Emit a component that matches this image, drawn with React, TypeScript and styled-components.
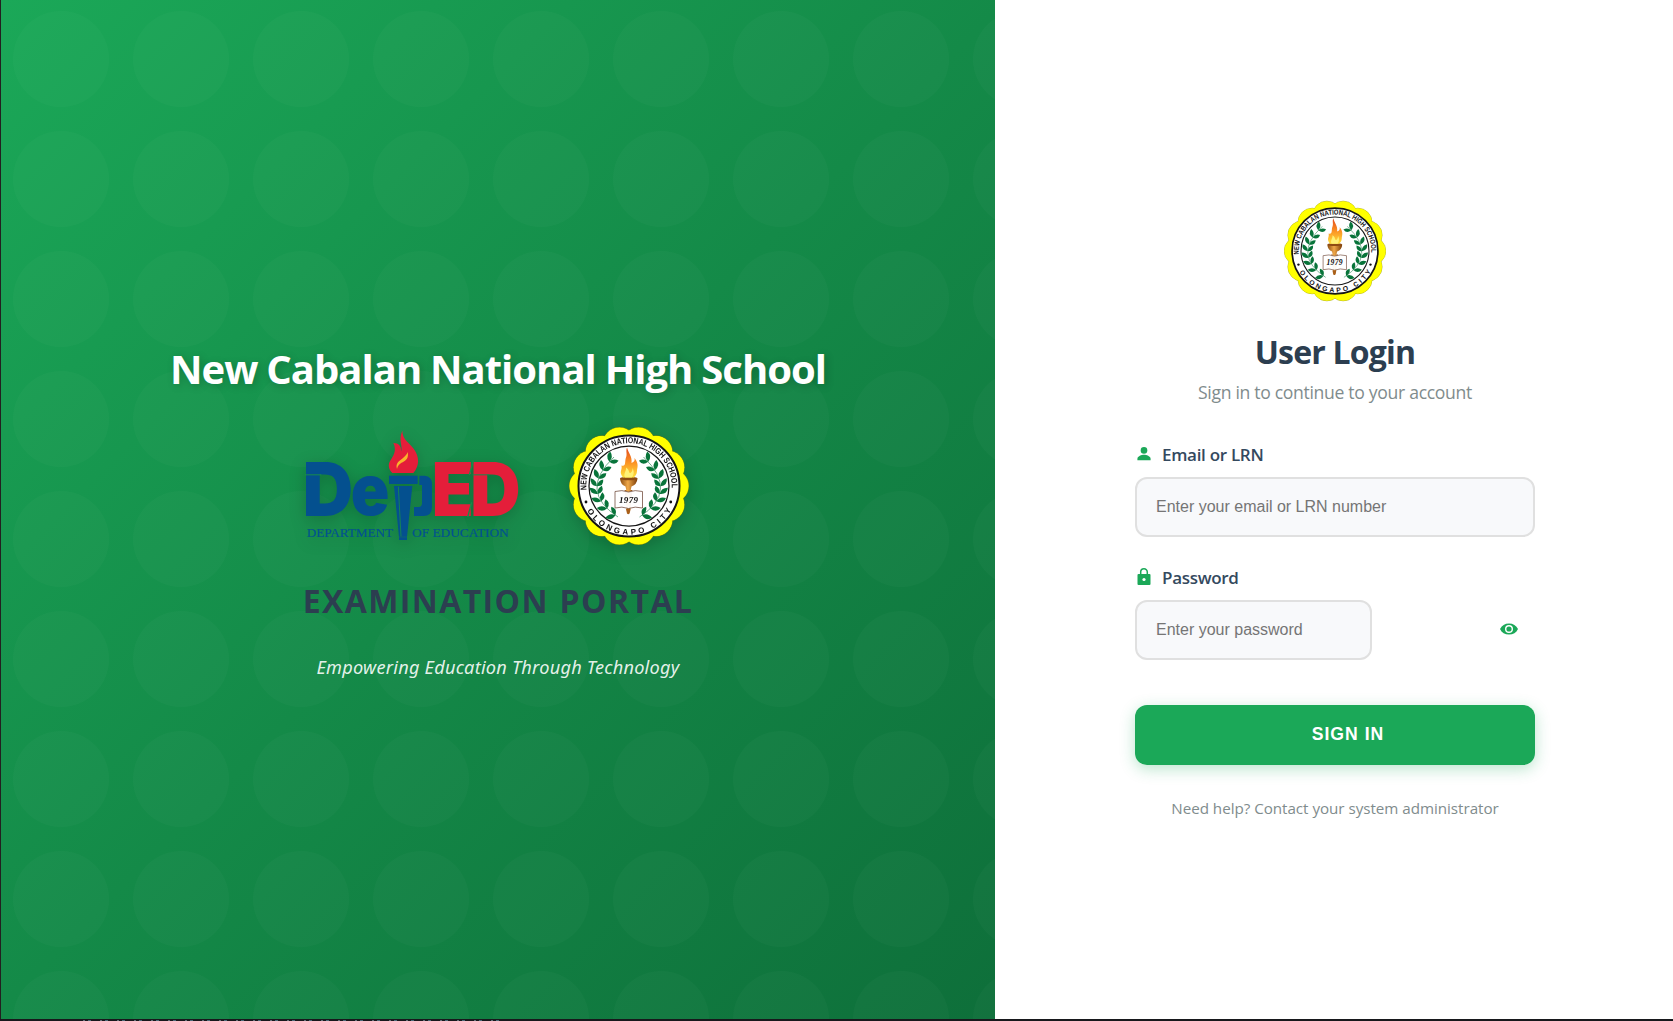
import React, { useState } from "react";
import styled, { createGlobalStyle } from "styled-components";

const GlobalStyle = createGlobalStyle`
  *, *::before, *::after { box-sizing: border-box; }
  html, body { margin: 0; padding: 0; height: 100%; overflow: hidden; }
  body { background: #17181c; font-family: "Segoe UI", "Open Sans", "Noto Sans", sans-serif; }
`;

const Page = styled.div`
  display: flex;
  flex-direction: column;
  width: 1673px;
  height: 1021px;
`;

const Split = styled.main`
  display: flex;
  flex: 1;
  min-height: 0;
  padding-left: 1px;
  background: #231f20;
`;

const Brand = styled.section`
  width: 994px;
  display: flex;
  flex-direction: column;
  align-items: center;
  padding-top: 345px;
  background:
    radial-gradient(circle at 50% 50%, rgba(255, 255, 255, 0.02) 47.6px, transparent 48.4px) 0 -1px / 120px 120px,
    linear-gradient(135deg, #1ba858 0%, #148a48 50%, #0e6f3a 100%);
`;

const Title = styled.h1`
  margin: 0 0 33px;
  font-size: 40px;
  line-height: 48px;
  font-weight: 700;
  letter-spacing: -0.98px;
  word-spacing: -0.6px;
  color: #fff;
  white-space: nowrap;
  text-shadow: 2px 2px 8px rgba(0, 0, 0, 0.2);
`;

const Logos = styled.div`
  display: flex;
  align-items: center;
  gap: 49px;
  height: 120px;
  margin-bottom: 35px;
  padding-right: 2px;
  svg { filter: drop-shadow(0 4px 8px rgba(0, 0, 0, 0.2)); overflow: visible; }
`;

const Portal = styled.h2`
  margin: 0 0 34px;
  font-size: 32px;
  line-height: 40px;
  font-weight: 700;
  letter-spacing: 1.4px;
  word-spacing: 1px;
  color: #2c3e50;
  white-space: nowrap;
`;

const Tagline = styled.p`
  margin: 0;
  font-family: "Segoe UI", "Noto Sans", "Open Sans", sans-serif;
  font-size: 18.2px;
  line-height: 24px;
  font-style: italic;
  letter-spacing: 0.22px;
  color: rgba(255, 255, 255, 0.9);
  white-space: nowrap;
`;

const LoginPanel = styled.section`
  flex: 1;
  display: flex;
  flex-direction: column;
  align-items: center;
  padding: 200px 0 0 2px;
  background: #fff;
`;

const Heading = styled.h2`
  margin: 30px 0 8px;
  font-size: 32px;
  line-height: 40px;
  font-weight: 700;
  letter-spacing: -0.8px;
  color: #2c3e50;
`;

const Subtitle = styled.p`
  margin: 0 0 39px;
  font-size: 17.6px;
  line-height: 24px;
  letter-spacing: -0.32px;
  color: #7f8c8d;
`;

const Form = styled.form`
  display: flex;
  flex-direction: column;
  width: 400px;
`;

const Label = styled.label`
  display: flex;
  align-items: center;
  height: 24px;
  margin-bottom: 10px;
  font-size: 17px;
  line-height: 24px;
  font-weight: 600;
  letter-spacing: -0.3px;
  color: #34495e;
  svg { margin: -3px 9px 0 0; }
`;

const Field = styled.div`
  display: flex;
  align-items: center;
  justify-content: space-between;
  margin-bottom: 29px;
  padding-right: 17px;
`;

const Input = styled.input<{ $width: number }>`
  flex: none;
  width: ${(p) => p.$width}px;
  height: 60px;
  padding: 0 20px 1px 19px;
  border: 2px solid #e0e0e0;
  border-radius: 12px;
  background: #f8f9fb;
  font: 16px "Liberation Sans", Arial, sans-serif;
  outline: none;
  &::placeholder { color: #757575; opacity: 1; }
`;

const EyeButton = styled.button`
  display: flex;
  padding: 0;
  border: 0;
  background: none;
  margin-top: -3px;
`;

const SignIn = styled.button`
  height: 60px;
  margin: 16px 0 31px;
  padding: 0 0 2px 26px;
  border: 0;
  border-radius: 12px;
  background: #1ba858;
  color: #fff;
  font: bold 17.6px "Liberation Sans", Arial, sans-serif;
  letter-spacing: 1px;
  box-shadow: 0 4px 15px rgba(27, 168, 88, 0.3);
`;

const Help = styled.p`
  margin: 0;
  font-size: 15.2px;
  line-height: 24px;
  letter-spacing: -0.03px;
  text-align: center;
  white-space: nowrap;
  color: #7f8c8d;
`;

const Footer = styled.footer`
  height: 2px;
  background:
    repeating-linear-gradient(90deg, #17181c 0 3px, #66717a 3px 5px, #17181c 5px 8px, #4d6b7a 8px 11px, #17181c 11px 17px) 80px 1px / 426px 1px no-repeat,
    #17181c;
`;

const LEAF_ANGLES = [-62, -45, -28, -10, 6, 20, 34, 48];

function Laurel() {
  return (
    <g fill="#08743a">
      <path d="M98 182 Q18 130 90 62" fill="none" stroke="#08743a" strokeWidth="1.2" />
      {LEAF_ANGLES.map((angle, i) => {
        const t = 0.04 + i * 0.128;
        const x = (1 - t) * (1 - t) * 98 + 2 * (1 - t) * t * 18 + t * t * 90;
        const y = (1 - t) * (1 - t) * 182 + 2 * (1 - t) * t * 130 + t * t * 62;
        return (
          <g key={i} transform={`translate(${x} ${y}) rotate(${angle})`}>
            <path d="M0 1 Q-15 0 -14 -14 Q-1 -12 0 1Z" />
            <path d="M0 1 Q0 -11 11 -14 Q14 -1 0 1Z" />
          </g>
        );
      })}
    </g>
  );
}

function Seal({ size, id }: { size: number; id: string }) {
  const lobes = Array.from({ length: 14 }, (_, i) => {
    const a = (i * 2 * Math.PI) / 14;
    return [120 + 86 * Math.cos(a), 120 + 86 * Math.sin(a)];
  });
  return (
    <svg width={size} height={size} viewBox="0 0 240 240">
      <defs>
        <path id={`${id}-top`} d="M35 128 A85.4 85.4 0 1 1 205 128" />
        <path id={`${id}-bottom`} d="M29 155 A97.5 97.5 0 0 0 211 155" />
        <linearGradient id={`${id}-torch`} x1="0" x2="1">
          <stop offset="0" stopColor="#8a4b10" />
          <stop offset="0.45" stopColor="#f0a848" />
          <stop offset="1" stopColor="#7a3c08" />
        </linearGradient>
        <linearGradient id={`${id}-flame`} x1="0" y1="0" x2="0" y2="1">
          <stop offset="0" stopColor="#e2491c" />
          <stop offset="0.5" stopColor="#fb9224" />
          <stop offset="1" stopColor="#ffe23b" />
        </linearGradient>
      </defs>
      {lobes.map(([x, y], i) => (
        <circle key={i} cx={x} cy={y} r="33.5" fill="#ff0" stroke="#6f6f00" strokeWidth="1" />
      ))}
      {lobes.map(([x, y], i) => (
        <circle key={i} cx={x} cy={y} r="32.8" fill="#ff0" />
      ))}
      <circle cx="120" cy="120" r="101" fill="#fff" stroke="#151515" strokeWidth="4" />
      <circle cx="120" cy="120" r="80" fill="#fff" stroke="#151515" strokeWidth="2.5" />
      <g fontFamily="Liberation Sans, Arial, sans-serif" fontWeight="700" fill="#111">
        <text fontSize="17">
          <textPath href={`#${id}-top`} textLength="280" lengthAdjust="spacingAndGlyphs">
            NEW CABALAN NATIONAL HIGH SCHOOL
          </textPath>
        </text>
        <text fontSize="16">
          <textPath href={`#${id}-bottom`} startOffset="16" textLength="204" lengthAdjust="spacing">
            OLONGAPO CITY
          </textPath>
        </text>
      </g>
      <circle cx="34" cy="152" r="2.8" fill="#111" />
      <circle cx="203.5" cy="152" r="2.8" fill="#111" />
      <Laurel />
      <g transform="translate(239 0) scale(-1 1)"><Laurel /></g>
      <path d="M111 128 L127 128 L122 172 Q119 178 116 172Z" fill={`url(#${id}-torch)`} />
      <path d="M92 131 Q106 127 119 132 Q132 127 147 131 V164 Q132 160 119 165 Q106 160 92 164Z" fill="#fff" fillOpacity="0.94" stroke="#6c4636" strokeWidth="1.5" />
      <path d="M114 166 h9 l-2 9 q-2.5 3 -5 0z" fill="#a9601a" />
      <path d="M102 105 H137 Q136 117 125 121 L123 130 H115 L113 121 Q103 117 102 105Z" fill={`url(#${id}-torch)`} />
      <ellipse cx="119.5" cy="105" rx="17.5" ry="3.5" fill="#8e4b12" />
      <path d="M108 103 C99 91 107 89 105 79 C115 82 111 70 114 63 C117 56 113 51 116 43 C119 55 127 61 125 74 C131 72 132 68 131 64 C141 76 136 84 136 90 C136 97 132 100 130 103Z" fill={`url(#${id}-flame)`} />
      <path d="M112 103 C108 95 115 91 114 83 C122 88 119 95 123 94 C127 91 127 87 127 84 C132 94 128 99 126 103Z" fill="#fff176" />
      <text x="119" y="154" textAnchor="middle" fontFamily="Liberation Serif, serif" fontStyle="italic" fontWeight="700" fontSize="18" fill="#111" textLength="38">1979</text>
    </svg>
  );
}

function DepEdLogo() {
  const blue = "#04508f";
  const red = "#e41e3a";
  return (
    <svg width="215" height="120" viewBox="45 33 645 360">
      <g fontFamily="Inter, sans-serif" fontWeight="900">
        <text x="38" y="302" fontSize="224" fill={blue} textLength="151" lengthAdjust="spacingAndGlyphs">D</text>
        <text x="182" y="300" fontSize="212" fill={blue} textLength="116" lengthAdjust="spacingAndGlyphs">e</text>
        <text x="425" y="302" fontSize="224" fill={red} textLength="126" lengthAdjust="spacingAndGlyphs">E</text>
        <text x="541" y="302" fontSize="224" fill={red} textLength="151" lengthAdjust="spacingAndGlyphs">D</text>
      </g>
      <path d="M45 179.5H94M548 179.5H598" stroke="#188c4b" strokeWidth="3" />
      <path d="M550 136L538 180M545 262L533 306" stroke="#188c4b" strokeWidth="4" />
      <path d="M388 182H404Q426 184 426 207V275Q426 303 400 303H372V276H386Q396 276 396 265V210H388Z" fill={blue} />
      <path d="M297 182H383V207H297Z" fill={blue} />
      <path d="M312 213H367L351 366V375H327V366Z" fill={blue} />
      <path d="M325 215L333 364" stroke="#188c4b" strokeWidth="2.5" />
      <path d="M327 366H351" stroke="#188c4b" strokeWidth="1" />
      <path d="M307 174C293 160 294 145 304 132C314 117 319 102 310 84C326 84 335 94 333 110C340 94 324 77 337 47C337 74 357 81 371 101C390 127 388 153 370 174Z" fill={red} />
      <path d="M321 162C315 143 330 137 339 129C348 122 351 117 353 111C357 129 348 136 338 142C328 147 324 151 321 162Z" fill="#f9b52b" />
      <g fontFamily="Liberation Serif, serif" fontSize="38" fill={blue} stroke={blue} strokeWidth="0.6">
        <text x="51" y="366" textLength="259" lengthAdjust="spacingAndGlyphs">DEPARTMENT</text>
        <text x="367" y="366" textLength="290" lengthAdjust="spacingAndGlyphs">OF EDUCATION</text>
      </g>
    </svg>
  );
}

const PersonIcon = () => (
  <svg width="18" height="20" viewBox="0 0 18 20" fill="#1ba858">
    <circle cx="9" cy="6.4" r="3.3" />
    <path d="M2.4 16.2V14.8C2.4 12.3 6.6 10.8 9 10.8S15.6 12.3 15.6 14.8V16.2Z" />
  </svg>
);

const LockIcon = () => (
  <svg width="18" height="20" viewBox="0 0 18 20">
    <path d="M5.7 8V5A3.3 3.3 0 0 1 12.3 5V8" fill="none" stroke="#1ba858" strokeWidth="1.5" />
    <rect x="2.5" y="7" width="13" height="11" rx="1" fill="#1ba858" />
    <circle cx="9" cy="12.5" r="1.6" fill="#fff" />
  </svg>
);

const EyeIcon = () => (
  <svg width="18" height="12" viewBox="0 0 18 12">
    <path d="M0 6C1.6 2.4 5 .4 9 .4S16.4 2.4 18 6C16.4 9.6 13 11.6 9 11.6S1.6 9.6 0 6Z" fill="#1ba858" />
    <circle cx="9" cy="6" r="3.3" fill="#1ba858" stroke="#fff" strokeWidth="1.4" />
  </svg>
);

export default function App() {
  const [visible, setVisible] = useState(false);
  return (
    <Page>
      <GlobalStyle />
      <Split>
        <Brand>
          <Title>New Cabalan National High School</Title>
          <Logos>
            <DepEdLogo />
            <Seal size={120} id="brand-seal" />
          </Logos>
          <Portal>EXAMINATION PORTAL</Portal>
          <Tagline>Empowering Education Through Technology</Tagline>
        </Brand>
        <LoginPanel>
          <Seal size={102} id="login-seal" />
          <Heading>User Login</Heading>
          <Subtitle>Sign in to continue to your account</Subtitle>
          <Form onSubmit={(e: React.FormEvent) => e.preventDefault()}>
            <Label htmlFor="login"><PersonIcon />Email or LRN</Label>
            <Field><Input id="login" $width={400} placeholder="Enter your email or LRN number" /></Field>
            <Label htmlFor="password"><LockIcon />Password</Label>
            <Field>
              <Input id="password" $width={237} type={visible ? "text" : "password"} placeholder="Enter your password" />
              <EyeButton type="button" aria-label="Show password" onClick={() => setVisible(!visible)}><EyeIcon /></EyeButton>
            </Field>
            <SignIn type="submit">SIGN IN</SignIn>
            <Help>Need help? Contact your system administrator</Help>
          </Form>
        </LoginPanel>
      </Split>
      <Footer />
    </Page>
  );
}
